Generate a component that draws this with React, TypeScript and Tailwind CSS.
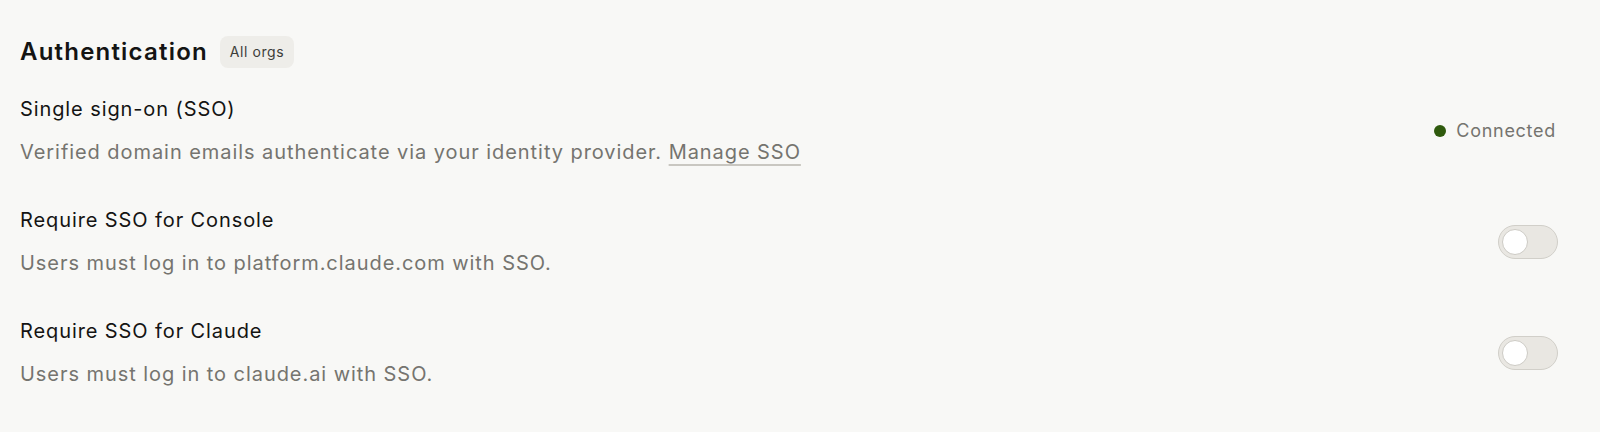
import React from "react";

const Toggle = () => (
  <button
    type="button"
    className="flex h-[34px] w-[60px] shrink-0 items-center rounded-full border border-[#d1cfc9] bg-[#e9e7e2] px-[3px]"
  >
    <span className="block h-[26px] w-[26px] rounded-full border border-[#cdcbc5] bg-white" />
  </button>
);

const Row = ({
  title,
  children,
  right,
}: {
  title: string;
  children: React.ReactNode;
  right: React.ReactNode;
}) => (
  <div className="flex items-center justify-between">
    <div className="flex flex-col">
      <div className="text-[20px] leading-[28px] tracking-[0.045em] text-[#141413]">{title}</div>
      <div className="mt-[15px] text-[20px] leading-[28px] tracking-[0.047em] text-[#75746f]">
        {children}
      </div>
    </div>
    {right}
  </div>
);

export default function App() {
  return (
    <div
      className="min-h-[432px] w-full bg-[#f8f8f6] pl-5 pr-[42px] pt-[36px]"
      style={{ fontFamily: "Inter, 'Noto Sans', sans-serif" }}
    >
      <div className="flex h-8 items-center gap-3">
        <h2 className="text-[24px] font-semibold leading-[32px] tracking-[0.05em] text-[#141413]">
          Authentication
        </h2>
        <span className="rounded-lg bg-[#eeede9] px-[10px] py-[6px] text-[14px] leading-[20px] tracking-[0.04em] text-[#3d3d3a]">
          All orgs
        </span>
      </div>

      <div className="mt-[27px] flex flex-col gap-10">
        <Row
          title="Single sign-on (SSO)"
          right={
            <div className="flex items-center gap-[10px] pr-[2px] text-[18px] tracking-[0.04em] text-[#75746f]">
              <span className="block h-3 w-3 rounded-full bg-[#2f5a0d]" />
              Connected
            </div>
          }
        >
          Verified domain emails authenticate via your identity provider.{" "}
          <a className="underline decoration-[#c9c7c1] underline-offset-[5px]">Manage SSO</a>
        </Row>
        <Row title="Require SSO for Console" right={<Toggle />}>
          Users must log in to platform.claude.com with SSO.
        </Row>
        <Row title="Require SSO for Claude" right={<Toggle />}>
          Users must log in to claude.ai with SSO.
        </Row>
      </div>
    </div>
  );
}
